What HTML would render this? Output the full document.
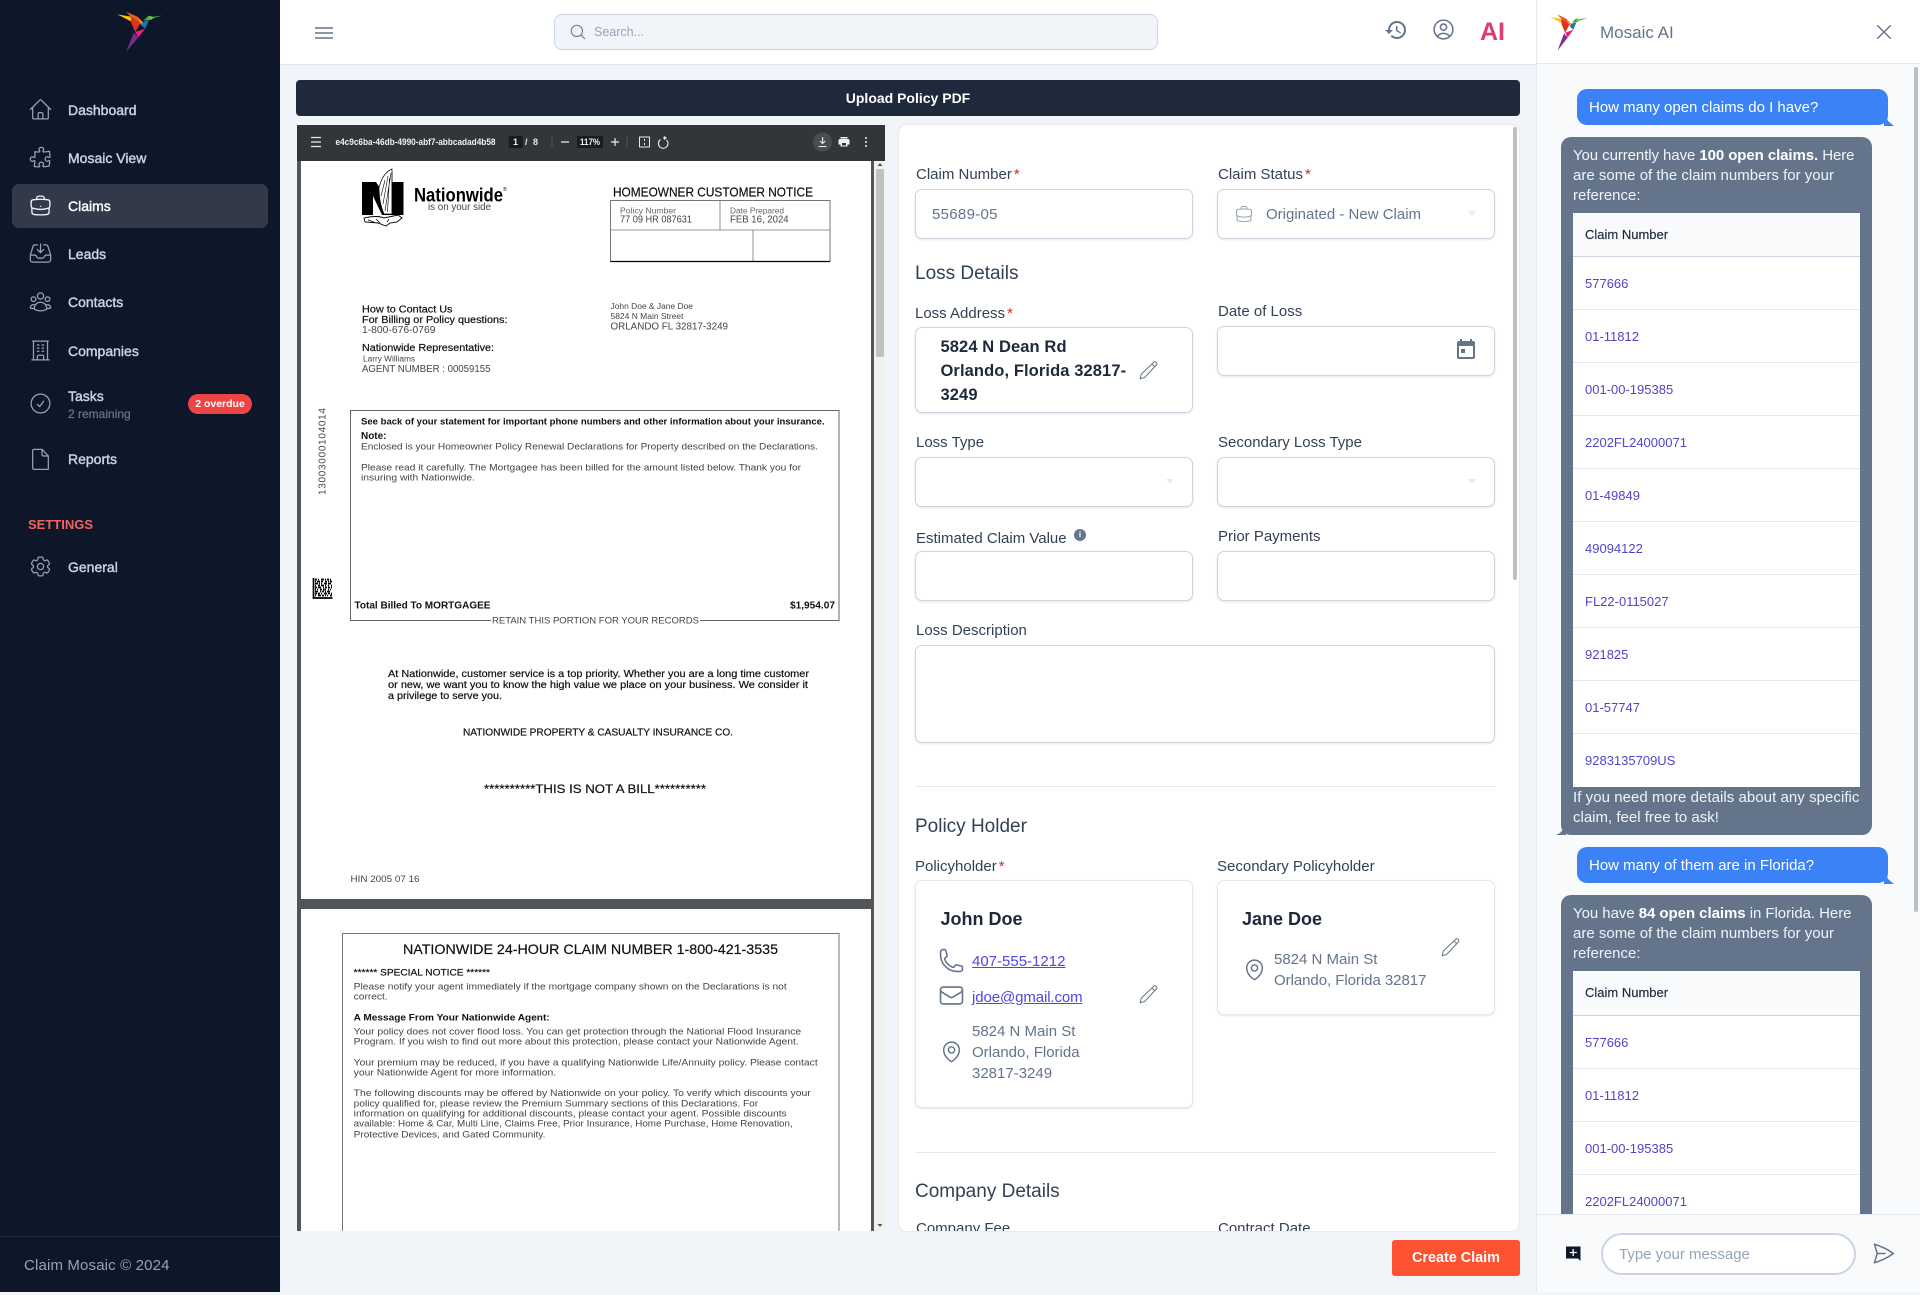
<!DOCTYPE html>
<html><head><meta charset="utf-8"><title>Claim Mosaic</title>
<style>
*{box-sizing:border-box}
html,body{margin:0;padding:0}
body{width:1920px;height:1292px;position:relative;overflow:hidden;background:#f1f5f9;font-family:"Liberation Sans",sans-serif;color:#334155}
.t{position:absolute;line-height:20px;margin-top:-9px;white-space:nowrap}
.a{position:absolute}
.i{position:absolute;fill:none;stroke-linecap:round;stroke-linejoin:round}
.nav{font-size:14px;color:#cbd5e1;-webkit-text-stroke:.4px #cbd5e1;left:68px;margin-top:-10px}
.lbl{font-size:15px;color:#334155}
.req{color:#dc2626;margin-left:2px}
.box{position:absolute;background:#fff;border:1px solid #cbd5e1;border-radius:7px;box-shadow:0 1px 2px rgba(15,23,42,.1)}
.h{font-size:19px;color:#334155}
.g{font-size:15px;color:#64748b}
.lnk{font-size:15px;color:#4f46e5;text-decoration:underline}
.ch{font-size:15px;color:#f1f5f9}
.bub{position:absolute;border-radius:10px}
.tb{position:absolute;left:1573px;width:287px;background:#fff}
.row{height:53px;border-bottom:1px solid #e2e8f0;padding-left:12px;line-height:54px;font-size:13px;color:#5046c8}
.th{background:#f8fafc;border-bottom:1px solid #cbd5e1;padding-left:12px;font-size:13px;color:#1e293b;-webkit-text-stroke:.15px #1e293b}
svg text{font-family:"Liberation Sans",sans-serif;dominant-baseline:central;fill:#111}
.b{font-weight:700}.m{stroke:#111;stroke-width:.2}.gy{fill:#444}
</style></head>
<body>
<svg width="0" height="0" style="position:absolute"><defs>
<symbol id="bird" viewBox="0 0 240 180" preserveAspectRatio="none">
<polygon points="52,43 92,50 100,68" fill="#fbc50d"/>
<polygon points="78,35 112,50 122,70 92,50" fill="#ef5a24"/>
<polygon points="92,50 122,68 106,96 94,70" fill="#e0301e"/>
<polygon points="112,50 128,66 124,76" fill="#f7931e"/>
<polygon points="128,66 147,60 136,86 124,76" fill="#1c75bc"/>
<polygon points="130,62 146,47 152,60 147,60" fill="#39b54a"/>
<polygon points="146,47 164,52 152,60" fill="#8cc63f"/>
<polygon points="160,50 186,47 162,54" fill="#2e9e4f"/>
<polygon points="106,96 136,86 115,112" fill="#ec1e79"/>
<polygon points="102,98 115,112 78,156 92,122" fill="#7b2d8e"/>
</symbol>
</defs></svg>

<!-- SIDEBAR -->
<div class="a" style="left:0;top:0;width:280px;height:1292px;background:#0e172a"></div>
<svg class="a" style="left:100px;top:0" width="80" height="60"><use href="#bird"/></svg>
<div class="a" style="left:12px;top:184px;width:256px;height:44px;background:#323949;border-radius:7px"></div>

<svg class="i" style="left:28px;top:97px;stroke:#94a3b8;stroke-width:1.2" width="25" height="25" viewBox="0 0 24 24"><path d="M2.25 12l8.954-8.955c.44-.439 1.152-.439 1.591 0L21.75 12M4.5 9.75v10.125c0 .621.504 1.125 1.125 1.125H9.75v-4.875c0-.621.504-1.125 1.125-1.125h2.25c.621 0 1.125.504 1.125 1.125V21h4.125c.621 0 1.125-.504 1.125-1.125V9.75M8.25 21h8.25"/></svg>
<svg class="i" style="left:28px;top:145px;stroke:#94a3b8;stroke-width:1.2" width="25" height="25" viewBox="0 0 24 24"><path d="M14.25 6.087c0-.355.186-.676.401-.959.221-.29.349-.634.349-1.003 0-1.036-1.007-1.875-2.25-1.875s-2.25.84-2.25 1.875c0 .369.128.713.349 1.003.215.283.401.604.401.959v0a.64.64 0 01-.657.643 48.39 48.39 0 01-4.163-.3c.186 1.613.293 3.25.315 4.907a.656.656 0 01-.658.663v0c-.355 0-.676-.186-.959-.401a1.647 1.647 0 00-1.003-.349c-1.036 0-1.875 1.007-1.875 2.25s.84 2.25 1.875 2.25c.369 0 .713-.128 1.003-.349.283-.215.604-.401.959-.401v0c.31 0 .555.26.532.57a48.039 48.039 0 01-.642 5.056c1.518.19 3.058.309 4.616.354a.64.64 0 00.657-.643v0c0-.355-.186-.676-.401-.959a1.647 1.647 0 01-.349-1.003c0-1.035 1.008-1.875 2.25-1.875 1.243 0 2.25.84 2.25 1.875 0 .369-.128.713-.349 1.003-.215.283-.4.604-.4.959v0c0 .333.277.599.61.58a48.1 48.1 0 005.427-.63 48.05 48.05 0 00.582-4.717.532.532 0 00-.533-.57v0c-.355 0-.676.186-.959.401-.29.221-.634.349-1.003.349-1.035 0-1.875-1.007-1.875-2.25s.84-2.25 1.875-2.25c.37 0 .713.128 1.003.349.283.215.604.401.96.401v0a.656.656 0 00.658-.663 48.422 48.422 0 00-.37-5.36c-1.886.342-3.81.574-5.766.689a.578.578 0 01-.61-.58v0z"/></svg>
<svg class="i" style="left:28px;top:193px;stroke:#f1f5f9;stroke-width:1.3" width="25" height="25" viewBox="0 0 24 24"><path d="M20.25 14.15v4.25c0 1.094-.787 2.036-1.872 2.18-2.087.277-4.216.42-6.378.42s-4.291-.143-6.378-.42c-1.085-.144-1.872-1.086-1.872-2.18v-4.25m16.5 0a2.18 2.18 0 00.75-1.661V8.706c0-1.081-.768-2.015-1.837-2.175a48.114 48.114 0 00-3.413-.387m4.5 8.006c-.194.165-.42.295-.673.38A23.978 23.978 0 0112 15.75c-2.648 0-5.195-.429-7.577-1.22a2.016 2.016 0 01-.673-.38m0 0A2.18 2.18 0 013 12.489V8.706c0-1.081.768-2.015 1.837-2.175a48.111 48.111 0 013.413-.387m7.5 0V5.25A2.25 2.25 0 0013.5 3h-3a2.25 2.25 0 00-2.25 2.25v.894m7.5 0a48.667 48.667 0 00-7.5 0M12 12.75h.008v.008H12v-.008z"/></svg>
<svg class="i" style="left:28px;top:241px;stroke:#94a3b8;stroke-width:1.2" width="25" height="25" viewBox="0 0 24 24"><path d="M9 3.75H6.912a2.25 2.25 0 00-2.15 1.588L2.35 13.177a2.25 2.25 0 00-.1.661V18a2.25 2.25 0 002.25 2.25h15A2.25 2.25 0 0021.75 18v-4.162c0-.224-.034-.447-.1-.661L19.24 5.338a2.25 2.25 0 00-2.15-1.588H15M2.25 13.5h3.86a2.25 2.25 0 012.012 1.244l.256.512a2.25 2.25 0 002.013 1.244h3.218a2.25 2.25 0 002.013-1.244l.256-.512a2.25 2.25 0 012.013-1.244h3.859M12 3v8.25m0 0l-3-3m3 3l3-3"/></svg>
<svg class="i" style="left:28px;top:289px;stroke:#94a3b8;stroke-width:1.2" width="25" height="25" viewBox="0 0 24 24"><path d="M18 18.72a9.094 9.094 0 003.741-.479 3 3 0 00-4.682-2.72m.94 3.198l.001.031c0 .225-.012.447-.037.666A11.944 11.944 0 0112 21c-2.17 0-4.207-.576-5.963-1.584A6.062 6.062 0 016 18.719m12 0a5.971 5.971 0 00-.941-3.197m0 0A5.995 5.995 0 0012 12.75a5.995 5.995 0 00-5.058 2.772m0 0a3 3 0 00-4.681 2.72 8.986 8.986 0 003.74.477m.94-3.197a5.971 5.971 0 00-.94 3.197M15 6.75a3 3 0 11-6 0 3 3 0 016 0zm6 3a2.25 2.25 0 11-4.5 0 2.25 2.25 0 014.5 0zm-13.5 0a2.25 2.25 0 11-4.5 0 2.25 2.25 0 014.5 0z"/></svg>
<svg class="i" style="left:28px;top:338px;stroke:#94a3b8;stroke-width:1.2" width="25" height="25" viewBox="0 0 24 24"><path d="M3.75 21h16.5M4.5 3h15M5.25 3v18m13.5-18v18M9 6.75h1.5m-1.5 3h1.5m-1.5 3h1.5m3-6H15m-1.5 3H15m-1.5 3H15M9 21v-3.375c0-.621.504-1.125 1.125-1.125h3.75c.621 0 1.125.504 1.125 1.125V21"/></svg>
<svg class="i" style="left:28px;top:391px;stroke:#94a3b8;stroke-width:1.2" width="25" height="25" viewBox="0 0 24 24"><path d="M9 12.75L11.25 15 15 9.75M21 12a9 9 0 11-18 0 9 9 0 0118 0z"/></svg>
<svg class="i" style="left:28px;top:447px;stroke:#94a3b8;stroke-width:1.2" width="25" height="25" viewBox="0 0 24 24"><path d="M19.5 21.5H5.6c-.6 0-1.1-.5-1.1-1.1V3.4c0-.6.5-1.1 1.1-1.1h7.9l6 6.3z M13.5 2.3v4.9c0 .8.6 1.4 1.4 1.4h4.6 M19.5 8.6v12.9"/></svg>
<svg class="i" style="left:28px;top:554px;stroke:#94a3b8;stroke-width:1.2" width="25" height="25" viewBox="0 0 24 24"><path d="M9.594 3.94c.09-.542.56-.94 1.11-.94h2.593c.55 0 1.02.398 1.11.94l.213 1.281c.063.374.313.686.645.87.074.04.147.083.22.127.324.196.72.257 1.075.124l1.217-.456a1.125 1.125 0 011.37.49l1.296 2.247a1.125 1.125 0 01-.26 1.431l-1.003.827c-.293.24-.438.613-.431.992a6.759 6.759 0 010 .255c-.007.378.138.75.43.99l1.005.828c.424.35.534.954.26 1.43l-1.298 2.247a1.125 1.125 0 01-1.369.491l-1.217-.456c-.355-.133-.75-.072-1.076.124a6.57 6.57 0 01-.22.128c-.331.183-.581.495-.644.869l-.213 1.28c-.09.543-.56.941-1.11.941h-2.594c-.55 0-1.02-.398-1.11-.94l-.213-1.281c-.062-.374-.312-.686-.644-.87a6.52 6.52 0 01-.22-.127c-.325-.196-.72-.257-1.076-.124l-1.217.456a1.125 1.125 0 01-1.369-.49l-1.297-2.247a1.125 1.125 0 01.26-1.431l1.004-.827c.292-.24.437-.613.43-.992a6.932 6.932 0 010-.255c.007-.378-.138-.75-.43-.99l-1.004-.828a1.125 1.125 0 01-.26-1.43l1.297-2.247a1.125 1.125 0 011.37-.491l1.216.456c.356.133.751.072 1.076-.124.072-.044.146-.087.22-.128.332-.183.582-.495.644-.869l.214-1.281z M15 12a3 3 0 11-6 0 3 3 0 016 0z"/></svg>

<div class="t nav" style="top:110px">Dashboard</div>
<div class="t nav" style="top:158px">Mosaic View</div>
<div class="t nav" style="top:206px;color:#fff;-webkit-text-stroke:.4px #fff">Claims</div>
<div class="t nav" style="top:254px">Leads</div>
<div class="t nav" style="top:302px">Contacts</div>
<div class="t nav" style="top:350.500px">Companies</div>
<div class="t nav" style="top:396px">Tasks</div>
<div class="t" style="left:68px;top:413px;font-size:12px;color:#64748b;-webkit-text-stroke:.25px #64748b">2 remaining</div>
<div class="t nav" style="top:459px">Reports</div>
<div class="a" style="left:188px;top:394px;width:64px;height:20px;border-radius:10px;background:#ef4444;color:#fff;font-size:10.5px;font-weight:700;line-height:20px;text-align:center">2 overdue</div>
<div class="t" style="left:28px;top:524px;font-size:13px;font-weight:700;color:#f26363">SETTINGS</div>
<div class="t nav" style="top:567px">General</div>
<div class="a" style="left:0;top:1236px;width:280px;height:1px;background:#1e293b"></div>
<div class="t" style="left:24px;top:1265px;font-size:15px;letter-spacing:.15px;color:#94a3b8">Claim Mosaic © 2024</div>

<!-- HEADER -->
<div class="a" style="left:280px;top:0;width:1640px;height:65px;background:#fff;border-bottom:1px solid #e2e8f0"></div>
<svg class="i" style="left:315px;top:27px;stroke:#64748b;stroke-width:1.6" width="18" height="12" viewBox="0 0 18 12"><path d="M0 1h18M0 6h18M0 11h18"/></svg>
<div class="a" style="left:554px;top:14px;width:604px;height:36px;background:#f1f5f9;border:1px solid #cbd5e1;border-radius:8px"></div>
<svg class="i" style="left:569px;top:23px;stroke:#64748b;stroke-width:1.4" width="18" height="18" viewBox="0 0 24 24"><path d="M21 21l-5.197-5.197m0 0A7.5 7.5 0 105.196 5.196a7.5 7.5 0 0010.607 10.607z"/></svg>
<div class="t" style="left:594px;top:31px;font-size:12.5px;color:#94a3b8">Search...</div>
<svg class="a" style="left:1384px;top:18px;fill:#64748b" width="24" height="24" viewBox="0 0 24 24"><path d="M13 3a9 9 0 00-9 9H1l3.89 3.89.07.14L9 12H6c0-3.87 3.13-7 7-7s7 3.13 7 7-3.13 7-7 7c-1.93 0-3.68-.79-4.94-2.06l-1.42 1.42A8.954 8.954 0 0013 21a9 9 0 000-18zm-1 5v5l4.28 2.54.72-1.21-3.5-2.08V8H12z"/></svg>
<svg class="i" style="left:1431px;top:17px;stroke:#64748b;stroke-width:1.5" width="25" height="25" viewBox="0 0 24 24"><path d="M17.982 18.725A7.488 7.488 0 0012 15.75a7.488 7.488 0 00-5.982 2.975m11.963 0a9 9 0 10-11.963 0m11.963 0A8.966 8.966 0 0112 21a8.966 8.966 0 01-5.982-2.275M15 9.75a3 3 0 11-6 0 3 3 0 016 0z"/></svg>
<div class="t" style="left:1480px;top:31px;font-size:25px;font-weight:700;color:#e23a78;line-height:20px">AI</div>

<!-- Upload bar -->
<div class="a" style="left:296px;top:80px;width:1224px;height:36px;background:#1e293b;border-radius:4px;color:#fff;font-size:14px;font-weight:700;line-height:36px;text-align:center">Upload Policy PDF</div>

<!-- PDF -->
<div class="a" style="left:297px;top:125px;width:588px;height:1106px;overflow:hidden;background:#525659">
<svg width="588" height="1106" viewBox="297 125 588 1106" style="display:block">
<rect x="297" y="125" width="588" height="36" fill="#323639"/>
<rect x="874" y="161" width="11" height="1070" fill="#f1f1f1"/>
<rect x="876" y="169" width="8" height="188" fill="#c1c1c1"/>
<path d="M877.500 166l2.500-3 2.500 3zM877.500 1224l2.500 3 2.500-3z" fill="#555"/>
<rect x="301" y="161" width="570" height="738" fill="#fff"/>
<rect x="301" y="909" width="570" height="330" fill="#fff"/>
<!-- toolbar -->
<path d="M311 137.5h10M311 142h10M311 146.500h10" stroke="#e8eaed" stroke-width="1.2"/>
<text x="335.500" y="142" font-size="9" class="b" style="fill:#f1f1f1" textLength="160" lengthAdjust="spacingAndGlyphs">e4c9c6ba-46db-4990-abf7-abbcadad4b58</text>
<rect x="508.700" y="136" width="14" height="12" fill="#191b1c"/>
<text x="513" y="142" font-size="9" class="b" style="fill:#f1f1f1">1</text>
<text x="525" y="142" font-size="9" class="b" style="fill:#e8eaed" textLength="13" >/ 8</text>
<path d="M552 137v10M627 137v10" stroke="#55585b"/>
<path d="M561 142h8M611 142h8M615 138v8" stroke="#e8eaed" stroke-width="1.2"/>
<rect x="577" y="136" width="26" height="12" fill="#191b1c"/>
<text x="580" y="142" font-size="9" class="b" style="fill:#f1f1f1" textLength="20" lengthAdjust="spacingAndGlyphs">117%</text>
<rect x="639.500" y="137" width="10" height="10" fill="none" stroke="#e8eaed"/>
<path d="M644.500 139v2M644.500 143v2" stroke="#e8eaed"/>
<path d="M663 138h2.500M664 136.500l2 1.500-2 1.500M660.500 139.500a4.800 4.800 0 106 .5" fill="none" stroke="#e8eaed" stroke-width="1.100"/>
<circle cx="822.600" cy="142" r="9.500" fill="#4a4d50"/>
<path d="M822.600 137v6M820 141l2.600 2.500 2.600-2.500M818.500 146.500h8" fill="none" stroke="#e8eaed" stroke-width="1.100"/>
<path d="M840 139h8a1.500 1.500 0 011.500 1.500v4h-2v2h-7v-2h-2v-4a1.500 1.500 0 011.500-1.500z M840.500 137h7v1.500h-7z" fill="#f1f1f1"/>
<rect x="842" y="143" width="4" height="2.500" fill="#323639"/>
<circle cx="866" cy="138" r="1" fill="#f1f1f1"/><circle cx="866" cy="142" r="1" fill="#f1f1f1"/><circle cx="866" cy="146" r="1" fill="#f1f1f1"/>

<!-- nationwide logo -->
<rect x="362" y="182" width="11" height="33" fill="#000"/>
<rect x="392" y="182" width="11.500" height="33" fill="#000"/>
<polygon points="362,182 376,182 392,208 392,215 382,215 373,196" fill="#000"/>
<path d="M392 169c-7 3-11 10-13 19 0 9 2 19 5 26h8z" fill="#fff" stroke="#000" stroke-width=".7"/>
<path d="M391 173l-6 38M388 176l-5 28M385 180l-4 16M392 172v40M389.500 178l-2 34" stroke="#000" stroke-width=".6" fill="none"/>
<path d="M364 218c8-2 16-2 20 0l14-3 4 3-5 4-7 1-4 3-8-3-13-1z" fill="#fff" stroke="#000" stroke-width=".9"/>
<path d="M368 220l6 2M376 219l4 4M389 219l-2 3" stroke="#000" stroke-width=".7"/>
<text x="414" y="196" font-size="19" class="b" style="fill:#000" textLength="89" lengthAdjust="spacingAndGlyphs">Nationwide</text>
<text x="503" y="190" font-size="5" style="fill:#000">®</text>
<text x="428" y="207" font-size="10.500" textLength="63" lengthAdjust="spacingAndGlyphs" class="gy">is on your side</text>
<text x="613" y="192.500" font-size="12.500" class="m" textLength="200" lengthAdjust="spacingAndGlyphs">HOMEOWNER CUSTOMER NOTICE</text>
<rect x="610.500" y="200.500" width="219.500" height="61" fill="none" stroke="#555" stroke-width=".8"/>
<path d="M610.500 230h219.500M720 200.500V230M753 230v31" stroke="#777" stroke-width=".8"/>
<path d="M610.500 261.500h219.500" stroke="#000" stroke-width="1.200"/>
<text x="620" y="211" font-size="8" fill="#666" style="fill:#666" textLength="56" lengthAdjust="spacingAndGlyphs">Policy Number</text>
<text x="620" y="220" font-size="10" class="gy" textLength="72" lengthAdjust="spacingAndGlyphs">77 09 HR 087631</text>
<text x="730" y="211" font-size="8" style="fill:#666" textLength="54" lengthAdjust="spacingAndGlyphs">Date Prepared</text>
<text x="730" y="220" font-size="10" class="gy" textLength="58.600" lengthAdjust="spacingAndGlyphs">FEB 16, 2024</text>
<text x="362" y="310" font-size="10" class="m" textLength="90.500" lengthAdjust="spacingAndGlyphs">How to Contact Us</text>
<text x="362" y="320.500" font-size="10" class="m" textLength="145.500" lengthAdjust="spacingAndGlyphs">For Billing or Policy questions:</text>
<text x="362" y="330.500" font-size="10" class="gy" textLength="73.500" lengthAdjust="spacingAndGlyphs">1-800-676-0769</text>
<text x="362" y="348.500" font-size="10" class="m" textLength="132" lengthAdjust="spacingAndGlyphs">Nationwide Representative:</text>
<text x="363" y="359" font-size="8" class="gy" textLength="52" lengthAdjust="spacingAndGlyphs">Larry Williams</text>
<text x="362" y="369.500" font-size="10" class="gy" textLength="128.500" lengthAdjust="spacingAndGlyphs">AGENT NUMBER : 00059155</text>
<text x="610.500" y="306" font-size="8.500" class="gy" textLength="82.500" lengthAdjust="spacingAndGlyphs">John Doe &amp; Jane Doe</text>
<text x="610.500" y="316" font-size="8.500" class="gy" textLength="73" lengthAdjust="spacingAndGlyphs">5824 N Main Street</text>
<text x="610.500" y="327" font-size="10" class="gy" textLength="117.500" lengthAdjust="spacingAndGlyphs">ORLANDO FL 32817-3249</text>
<!-- vertical id -->
<text transform="translate(323 495) rotate(-90)" x="0" y="0" font-size="10" class="gy" textLength="87">13003000104014</text>
<!-- datamatrix -->
<rect x="312.500" y="578" width="20" height="20" fill="#fff"/>
<g stroke="#000" stroke-width="1.700" fill="none">
<path d="M313.500 578v20h19"/>
<path d="M315 579.500h17" stroke-dasharray="2 1 1 2 3 1 1 1"/>
<path d="M315 581.500h17" stroke-dasharray="1 1 3 1 2 2 2 1"/>
<path d="M315 583.500h17" stroke-dasharray="3 1 1 1 1 2 3 1"/>
<path d="M315 585.500h17" stroke-dasharray="1 2 2 1 3 1 1 2"/>
<path d="M315 587.500h17" stroke-dasharray="2 1 3 2 1 1 2 1"/>
<path d="M315 589.500h17" stroke-dasharray="1 1 1 2 2 1 3 2"/>
<path d="M315 591.500h17" stroke-dasharray="3 2 1 1 2 1 1 1"/>
<path d="M315 593.500h17" stroke-dasharray="2 1 2 1 1 2 3 1"/>
<path d="M315 595.500h17" stroke-dasharray="1 2 3 1 2 1 1 1"/>
</g>
<!-- box 1 -->
<rect x="350.500" y="410.500" width="488.500" height="210" fill="none" stroke="#666" stroke-width="1"/>
<text x="361" y="422" font-size="9.500" class="b" textLength="463.600" lengthAdjust="spacingAndGlyphs">See back of your statement for important phone numbers and other information about your insurance.</text>
<text x="361" y="436.500" font-size="10" class="b" textLength="25.500" lengthAdjust="spacingAndGlyphs">Note:</text>
<text x="361" y="447" font-size="9.500" class="gy" textLength="457" lengthAdjust="spacingAndGlyphs">Enclosed is your Homeowner Policy Renewal Declarations for Property described on the Declarations.</text>
<text x="361" y="468" font-size="9.500" class="gy" textLength="440" lengthAdjust="spacingAndGlyphs">Please read it carefully. The Mortgagee has been billed for the amount listed below. Thank you for</text>
<text x="361" y="478" font-size="9.500" class="gy" textLength="114" lengthAdjust="spacingAndGlyphs">insuring with Nationwide.</text>
<text x="354.500" y="606" font-size="10" class="b" textLength="136" lengthAdjust="spacingAndGlyphs">Total Billed To MORTGAGEE</text>
<text x="790" y="606" font-size="10" class="b" textLength="45" lengthAdjust="spacingAndGlyphs">$1,954.07</text>
<rect x="491" y="614" width="209" height="12" fill="#fff"/>
<text x="492" y="621" font-size="9.500" class="gy" textLength="207" lengthAdjust="spacingAndGlyphs">RETAIN THIS PORTION FOR YOUR RECORDS</text>
<text x="388" y="674.500" font-size="10" class="m" textLength="421" lengthAdjust="spacingAndGlyphs">At Nationwide, customer service is a top priority. Whether you are a long time customer</text>
<text x="388" y="685.500" font-size="10" class="m" textLength="420" lengthAdjust="spacingAndGlyphs">or new, we want you to know the high value we place on your business. We consider it</text>
<text x="388" y="696.500" font-size="10" class="m" textLength="114" lengthAdjust="spacingAndGlyphs">a privilege to serve you.</text>
<text x="463" y="733" font-size="10" class="m" textLength="270" lengthAdjust="spacingAndGlyphs">NATIONWIDE PROPERTY &amp; CASUALTY INSURANCE CO.</text>
<text x="484" y="790" font-size="11.500" class="m" textLength="222" lengthAdjust="spacingAndGlyphs">**********THIS IS NOT A BILL**********</text>
<text x="350.500" y="879" font-size="9" class="gy" textLength="69" lengthAdjust="spacingAndGlyphs">HIN 2005 07 16</text>
<!-- page 2 -->
<rect x="342.500" y="933.500" width="496.500" height="320" fill="none" stroke="#777" stroke-width="1"/>
<text x="403" y="949" font-size="14" class="m" textLength="375" lengthAdjust="spacingAndGlyphs">NATIONWIDE 24-HOUR CLAIM NUMBER 1-800-421-3535</text>
<text x="353.700" y="973" font-size="9.500" class="m" textLength="136.300" lengthAdjust="spacingAndGlyphs">****** SPECIAL NOTICE ******</text>
<text x="353.700" y="987" font-size="9.500" class="gy" textLength="433" lengthAdjust="spacingAndGlyphs">Please notify your agent immediately if the mortgage company shown on the Declarations is not</text>
<text x="353.700" y="997" font-size="9.500" class="gy" textLength="34" lengthAdjust="spacingAndGlyphs">correct.</text>
<text x="353.700" y="1018" font-size="9.500" class="b" textLength="196" lengthAdjust="spacingAndGlyphs">A Message From Your Nationwide Agent:</text>
<text x="353.700" y="1032" font-size="9.500" class="gy" textLength="447.500" lengthAdjust="spacingAndGlyphs">Your policy does not cover flood loss. You can get protection through the National Flood Insurance</text>
<text x="353.700" y="1042" font-size="9.500" class="gy" textLength="445" lengthAdjust="spacingAndGlyphs">Program. If you wish to find out more about this protection, please contact your Nationwide Agent.</text>
<text x="353.700" y="1063" font-size="9.500" class="gy" textLength="464" lengthAdjust="spacingAndGlyphs">Your premium may be reduced, if you have a qualifying Nationwide Life/Annuity policy. Please contact</text>
<text x="353.700" y="1073" font-size="9.500" class="gy" textLength="202.500" lengthAdjust="spacingAndGlyphs">your Nationwide Agent for more information.</text>
<text x="353.700" y="1093.500" font-size="9.500" class="gy" textLength="457" lengthAdjust="spacingAndGlyphs">The following discounts may be offered by Nationwide on your policy. To verify which discounts your</text>
<text x="353.700" y="1104" font-size="9.500" class="gy" textLength="404.500" lengthAdjust="spacingAndGlyphs">policy qualified for, please review the Premium Summary sections of this Declarations. For</text>
<text x="353.700" y="1114" font-size="9.500" class="gy" textLength="433" lengthAdjust="spacingAndGlyphs">information on qualifying for additional discounts, please contact your agent. Possible discounts</text>
<text x="353.700" y="1124" font-size="9.500" class="gy" textLength="439" lengthAdjust="spacingAndGlyphs">available: Home &amp; Car, Multi Line, Claims Free, Prior Insurance, Home Purchase, Home Renovation,</text>
<text x="353.700" y="1135" font-size="9.500" class="gy" textLength="191.700" lengthAdjust="spacingAndGlyphs">Protective Devices, and Gated Community.</text>
</svg>
</div>

<!-- FORM CARD -->
<div class="a" style="left:899px;top:125px;width:620px;height:1106px;background:#fff;border-radius:8px;box-shadow:0 0 2px rgba(15,23,42,.12)"></div>
<div class="a" style="left:1513px;top:127px;width:4px;height:453px;background:#bcbfc3;border-radius:2px"></div>
<div class="a" style="left:0;top:0;width:1920px;height:1292px;clip-path:inset(125px 0 61px 899px)">
<div class="t lbl" style="left:916px;top:174px">Claim Number<span class="req">*</span></div>
<div class="t lbl" style="left:1218px;top:174px">Claim Status<span class="req">*</span></div>
<div class="box" style="left:915px;top:189px;width:278px;height:50px"></div>
<div class="box" style="left:1217px;top:189px;width:278px;height:50px"></div>
<div class="t g" style="left:932px;top:214px;letter-spacing:.3px">55689-05</div>
<svg class="i" style="left:1234px;top:204px;stroke:#94a3b8;stroke-width:1.2" width="20" height="20" viewBox="0 0 24 24"><path d="M20.25 14.15v4.25c0 1.094-.787 2.036-1.872 2.18-2.087.277-4.216.42-6.378.42s-4.291-.143-6.378-.42c-1.085-.144-1.872-1.086-1.872-2.18v-4.25m16.5 0a2.18 2.18 0 00.75-1.661V8.706c0-1.081-.768-2.015-1.837-2.175a48.114 48.114 0 00-3.413-.387m4.5 8.006c-.194.165-.42.295-.673.38A23.978 23.978 0 0112 15.75c-2.648 0-5.195-.429-7.577-1.22a2.016 2.016 0 01-.673-.38m0 0A2.18 2.18 0 013 12.489V8.706c0-1.081.768-2.015 1.837-2.175a48.111 48.111 0 013.413-.387m7.5 0V5.25A2.25 2.25 0 0013.5 3h-3a2.25 2.25 0 00-2.25 2.25v.894m7.5 0a48.667 48.667 0 00-7.5 0"/></svg>
<div class="t g" style="left:1266px;top:214px">Originated - New Claim</div>
<svg class="a" style="left:1468px;top:211px;fill:#e8ecf1" width="8" height="5"><path d="M0 0h8L4 5z"/></svg>

<div class="t h" style="left:915px;top:273px">Loss Details</div>
<div class="t lbl" style="left:915px;top:313px">Loss Address<span class="req">*</span></div>
<div class="t lbl" style="left:1218px;top:311px">Date of Loss</div>
<div class="box" style="left:915px;top:327px;width:278px;height:86px"></div>
<div class="box" style="left:1217px;top:326px;width:278px;height:50px"></div>
<div class="t" style="left:940.500px;top:346px;font-size:16.500px;font-weight:700;letter-spacing:.1px;color:#1e293b">5824 N Dean Rd</div>
<div class="t" style="left:940.500px;top:370px;font-size:16.500px;font-weight:700;letter-spacing:.1px;color:#1e293b">Orlando, Florida 32817-</div>
<div class="t" style="left:940.500px;top:394px;font-size:16.500px;font-weight:700;letter-spacing:.1px;color:#1e293b">3249</div>
<svg class="i" style="left:1138px;top:360px;stroke:#64748b;stroke-width:1.200" width="20" height="20" viewBox="0 0 24 24"><path d="M19 2.500a2.300 2.300 0 013.200 3.200L8 21l-5.500 1.500L4 17z M17 5l2.500 2.500"/></svg>
<svg class="a" style="left:1454px;top:338px;fill:#64748b" width="24" height="24" viewBox="0 0 24 24"><path d="M19 3h-1V1h-2v2H8V1H6v2H5c-1.110 0-2 .9-2 2v14a2 2 0 002 2h14a2 2 0 002-2V5a2 2 0 00-2-2zm0 16H5V8h14v11zM7 11h4v4H7z"/></svg>

<div class="t lbl" style="left:916px;top:442px">Loss Type</div>
<div class="t lbl" style="left:1218px;top:442px">Secondary Loss Type</div>
<div class="box" style="left:915px;top:457px;width:278px;height:50px"></div>
<div class="box" style="left:1217px;top:457px;width:278px;height:50px"></div>
<svg class="a" style="left:1166px;top:479px;fill:#e8ecf1" width="8" height="5"><path d="M0 0h8L4 5z"/></svg>
<svg class="a" style="left:1468px;top:479px;fill:#e8ecf1" width="8" height="5"><path d="M0 0h8L4 5z"/></svg>

<div class="t lbl" style="left:916px;top:538px">Estimated Claim Value</div>
<div class="a" style="left:1074px;top:529px;width:12px;height:12px;border-radius:50%;background:#64748b;color:#fff;font-size:8px;font-weight:700;line-height:12px;text-align:center">i</div>
<div class="t lbl" style="left:1218px;top:536px">Prior Payments</div>
<div class="box" style="left:915px;top:551px;width:278px;height:50px"></div>
<div class="box" style="left:1217px;top:551px;width:278px;height:50px"></div>
<div class="t lbl" style="left:916px;top:630px">Loss Description</div>
<div class="box" style="left:915px;top:645px;width:580px;height:98px"></div>
<div class="a" style="left:915px;top:786px;width:581px;height:1px;background:#e2e8f0"></div>

<div class="t h" style="left:915px;top:826px">Policy Holder</div>
<div class="t lbl" style="left:915px;top:866px">Policyholder<span class="req">*</span></div>
<div class="t lbl" style="left:1217px;top:866px">Secondary Policyholder</div>
<div class="box" style="left:915px;top:880px;width:278px;height:228px;border-color:#e2e8f0"></div>
<div class="box" style="left:1217px;top:880px;width:278px;height:135px;border-color:#e2e8f0"></div>
<div class="t" style="left:940.500px;top:918px;font-size:18px;font-weight:700;color:#1e293b">John Doe</div>
<svg class="i" style="left:938px;top:947px;stroke:#64748b;stroke-width:1.400" width="27" height="27" viewBox="0 0 24 24"><path d="M2.250 6.750c0 8.284 6.716 15 15 15h2.250a2.250 2.250 0 002.250-2.250v-1.372c0-.516-.351-.966-.852-1.091l-4.423-1.106c-.44-.11-.902.055-1.173.417l-.97 1.293c-.282.376-.769.542-1.210.380a12.035 12.035 0 01-7.143-7.143c-.162-.441.004-.928.380-1.210l1.293-.97c.363-.271.527-.734.417-1.173L6.963 3.102a1.125 1.125 0 00-1.091-.852H4.500A2.250 2.250 0 002.250 4.500v2.250z"/></svg>
<div class="t lnk" style="left:972px;top:961px">407-555-1212</div>
<svg class="i" style="left:938px;top:982px;stroke:#64748b;stroke-width:1.400" width="27" height="27" viewBox="0 0 24 24"><path d="M21.750 6.750v10.500a2.250 2.250 0 01-2.250 2.250h-15a2.250 2.250 0 01-2.250-2.250V6.750m19.500 0A2.250 2.250 0 0019.500 4.500h-15a2.250 2.250 0 00-2.250 2.250m19.500 0v.243a2.250 2.250 0 01-1.070 1.916l-7.500 4.615a2.250 2.250 0 01-2.360 0L3.320 8.910a2.250 2.250 0 01-1.070-1.916V6.750"/></svg>
<div class="t lnk" style="left:972px;top:997px;letter-spacing:-.1px">jdoe@gmail.com</div>
<svg class="i" style="left:1138px;top:984px;stroke:#64748b;stroke-width:1.200" width="20" height="20" viewBox="0 0 24 24"><path d="M19 2.500a2.300 2.300 0 013.200 3.200L8 21l-5.500 1.500L4 17z M17 5l2.500 2.500"/></svg>
<div class="t g" style="left:972px;top:1031px">5824 N Main St</div>
<div class="t g" style="left:972px;top:1052px">Orlando, Florida</div>
<div class="t g" style="left:972px;top:1073px">32817-3249</div>
<svg class="i" style="left:939px;top:1039px;stroke:#64748b;stroke-width:1.400" width="25" height="25" viewBox="0 0 24 24"><path d="M15 10.500a3 3 0 11-6 0 3 3 0 016 0z M19.500 10.500c0 7.142-7.500 11.250-7.500 11.250S4.500 17.642 4.500 10.500a7.500 7.500 0 1115 0z"/></svg>
<div class="t" style="left:1242px;top:918px;font-size:18px;font-weight:700;color:#1e293b">Jane Doe</div>
<svg class="i" style="left:1242px;top:957px;stroke:#64748b;stroke-width:1.400" width="25" height="25" viewBox="0 0 24 24"><path d="M15 10.500a3 3 0 11-6 0 3 3 0 016 0z M19.500 10.500c0 7.142-7.500 11.250-7.500 11.250S4.500 17.642 4.500 10.500a7.500 7.500 0 1115 0z"/></svg>
<div class="t g" style="left:1274px;top:959px">5824 N Main St</div>
<div class="t g" style="left:1274px;top:980px;letter-spacing:-.05px">Orlando, Florida 32817</div>
<svg class="i" style="left:1440px;top:937px;stroke:#64748b;stroke-width:1.200" width="20" height="20" viewBox="0 0 24 24"><path d="M19 2.500a2.300 2.300 0 013.200 3.200L8 21l-5.500 1.500L4 17z M17 5l2.500 2.500"/></svg>
<div class="a" style="left:915px;top:1152px;width:581px;height:1px;background:#e2e8f0"></div>
<div class="t h" style="left:915px;top:1191px">Company Details</div>
<div class="t lbl" style="left:916px;top:1228px">Company Fee</div>
<div class="t lbl" style="left:1218px;top:1228px">Contract Date</div>
</div>

<div class="a" style="left:1392px;top:1240px;width:128px;height:36px;background:#ff5233;border-radius:3px;color:#fff;font-size:14.400px;font-weight:700;line-height:36px;text-align:center">Create Claim</div>

<!-- AI PANEL -->
<div class="a" style="left:1536px;top:0;width:384px;height:1292px;background:#f8fafc;border-left:1px solid #e2e8f0"></div>
<div class="a" style="left:1537px;top:0;width:383px;height:64px;background:#fff;border-bottom:1px solid #e2e8f0"></div>
<svg class="a" style="left:1536px;top:4px" width="66" height="54"><use href="#bird"/></svg>
<div class="t" style="left:1600px;top:32px;font-size:17px;color:#64748b">Mosaic AI</div>
<svg class="i" style="left:1877px;top:25px;stroke:#64748b;stroke-width:1.400" width="14" height="14" viewBox="0 0 14 14"><path d="M.7.7l12.600 12.600M13.300.7L.7 13.300"/></svg>
<div class="a" style="left:1914px;top:67px;width:4px;height:845px;background:#bcbfc3;border-radius:2px"></div>

<div class="a" style="left:0;top:0;width:1920px;height:1292px;clip-path:inset(65px 0 78px 1537px)">
<div class="bub" style="left:1577px;top:89px;width:311px;height:36px;background:#3b82f6"></div>
<svg class="a" style="left:1884px;top:118px;fill:#3b82f6" width="10" height="8"><path d="M0 0h3l1 3 6 5H0z"/></svg>
<div class="t ch" style="left:1589px;top:107px;color:#fff">How many open claims do I have?</div>

<div class="bub" style="left:1561px;top:137px;width:311px;height:698px;background:#64748b"></div>
<svg class="a" style="left:1556px;top:826px;fill:#64748b" width="10" height="9"><path d="M10 0v9H0l4-2z"/></svg>
<div class="t ch" style="left:1573px;top:155px;letter-spacing:-.08px">You currently have <b style="color:#fff">100 open claims.</b> Here</div>
<div class="t ch" style="left:1573px;top:175px">are some of the claim numbers for your</div>
<div class="t ch" style="left:1573px;top:195px">reference:</div>
<div class="tb" style="top:213px">
<div class="th" style="height:44px;line-height:43px">Claim Number</div>
<div class="row">577666</div><div class="row">01-11812</div><div class="row">001-00-195385</div><div class="row">2202FL24000071</div><div class="row">01-49849</div><div class="row">49094122</div><div class="row">FL22-0115027</div><div class="row">921825</div><div class="row">01-57747</div><div class="row" style="border:0">9283135709US</div>
</div>
<div class="t ch" style="left:1573px;top:796.500px;letter-spacing:.05px">If you need more details about any specific</div>
<div class="t ch" style="left:1573px;top:817px">claim, feel free to ask!</div>

<div class="bub" style="left:1577px;top:847px;width:311px;height:36px;background:#3b82f6"></div>
<svg class="a" style="left:1884px;top:876px;fill:#3b82f6" width="10" height="8"><path d="M0 0h3l1 3 6 5H0z"/></svg>
<div class="t ch" style="left:1589px;top:865px;color:#fff">How many of them are in Florida?</div>

<div class="bub" style="left:1561px;top:895px;width:311px;height:400px;background:#64748b"></div>
<div class="t ch" style="left:1573px;top:913px;letter-spacing:-.05px">You have <b style="color:#fff">84 open claims</b> in Florida. Here</div>
<div class="t ch" style="left:1573px;top:933px">are some of the claim numbers for your</div>
<div class="t ch" style="left:1573px;top:953px">reference:</div>
<div class="tb" style="top:971px">
<div class="th" style="height:45px;line-height:44px">Claim Number</div>
<div class="row">577666</div><div class="row">01-11812</div><div class="row">001-00-195385</div><div class="row">2202FL24000071</div>
</div>
</div>

<div class="a" style="left:1537px;top:1214px;width:383px;height:78px;background:#f8fafc;border-top:1px solid #e2e8f0"></div>
<svg class="a" style="left:1565px;top:1245px" width="17" height="18" viewBox="0 0 17 18"><path d="M1 1.500h14.500v14.500l-2.500-2.500H1z" fill="#0f172a"/><path d="M8.200 4v7M4.800 7.500h7" stroke="#fff" stroke-width="1.300"/></svg>
<div class="a" style="left:1601px;top:1233px;width:255px;height:42px;background:#fff;border:2px solid #cbd5e1;border-radius:21px"></div>
<div class="t" style="left:1619px;top:1254px;font-size:15px;color:#94a3b8">Type your message</div>
<svg class="i" style="left:1871px;top:1241px;stroke:#64748b;stroke-width:1.400" width="25" height="25" viewBox="0 0 24 24"><path d="M6 12L3.269 3.126A59.768 59.768 0 0121.485 12 59.770 59.770 0 013.270 20.876L5.999 12zm0 0h7.500"/></svg>
</body></html>
